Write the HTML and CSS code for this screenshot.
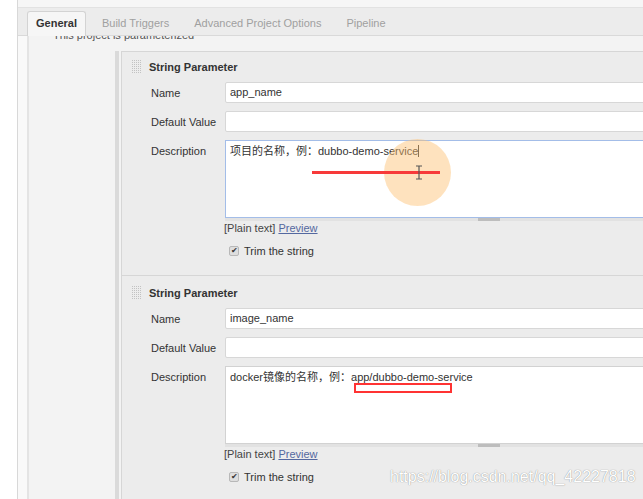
FILE: index.html
```html
<!DOCTYPE html>
<html lang="zh">
<head>
<meta charset="utf-8">
<title>Jenkins - General</title>
<link rel="stylesheet" href="styles.css">
</head>
<body>
<div class="stage">
  <div class="gutter"></div>
  <div class="frame">
    <div class="topstrip"></div>
    <div class="tabbar">
      <div class="tab active">General</div>
      <div class="tab">Build Triggers</div>
      <div class="tab">Advanced Project Options</div>
      <div class="tab">Pipeline</div>
    </div>
    <div class="body">
      <div class="rail"></div>
      <div class="main">
        <div class="pp-row"><span class="dash"></span><span>This project is parameterized</span></div>
        <div class="params">
          <div class="vbar"></div>
          <div class="blocks">
            <div class="block">
              <div class="head"><span class="grip"></span>String Parameter</div>
              <div class="fields">
                <div class="field"><div class="label">Name</div><div class="input">app_name</div></div>
                <div class="field"><div class="label">Default Value</div><div class="input"></div></div>
                <div class="field top last">
                  <div class="label">Description</div>
                  <div>
                    <div class="textarea focus">项目的名称，例：dubbo-demo-service<span class="caret"></span></div>
                    <div class="grip-bar"><div class="thumb"></div></div>
                    <div class="plain">[Plain text] <a>Preview</a></div>
                    <div class="trim"><span class="cb">✔</span>Trim the string</div>
                  </div>
                </div>
              </div>
            </div>
            <div class="block">
              <div class="head"><span class="grip"></span>String Parameter</div>
              <div class="fields">
                <div class="field"><div class="label">Name</div><div class="input">image_name</div></div>
                <div class="field"><div class="label">Default Value</div><div class="input"></div></div>
                <div class="field top last">
                  <div class="label">Description</div>
                  <div>
                    <div class="textarea">docker镜像的名称，例：app/dubbo-demo-service</div>
                    <div class="grip-bar"><div class="thumb"></div></div>
                    <div class="plain">[Plain text] <a>Preview</a></div>
                    <div class="trim"><span class="cb">✔</span>Trim the string</div>
                  </div>
                </div>
              </div>
            </div>
          </div>
        </div>
      </div>
    </div>
  </div>

  <div class="hl-circle"></div>
  <div class="red-line"></div>
  <svg class="ibeam" width="8" height="15" viewBox="0 0 8 15"><path d="M1 1h2.5c.3 0 .5.2.5.5M7 1H4.5c-.3 0-.5.2-.5.5V13.5c0 .3-.2.5-.5.5H1M4 13.5c0 .3.2.5.5.5H7" fill="none" stroke="#555" stroke-width="1.2"/></svg>
  <div class="red-box"></div>
  <div class="watermark">https://blog.csdn.net/qq_42227818</div>
</div>
</body>
</html>
```
FILE: styles.css
```css
html, body {
  margin: 0;
  padding: 0;
}
body {
  font-family: "Liberation Sans", Arial, "Noto Sans CJK SC", sans-serif;
  font-size: 11px;
  color: #333;
  background: #fff;
  overflow: hidden;
}
.stage {
  position: relative;
  width: 643px;
  height: 499px;
  overflow: hidden;
  display: flex;
}
.gutter {
  width: 17px;
  flex: none;
  background: #fff;
}
.frame {
  flex: 1;
  min-width: 0;
  border-left: 1px solid #d8d8d8;
  display: flex;
  flex-direction: column;
}
.topstrip {
  height: 7px;
  flex: none;
  background: #f6f6f6;
  border-bottom: 1px solid #e2e2e2;
}
.tabbar {
  height: 27px;
  flex: none;
  background: #ececec;
  border-bottom: 1px solid #d9d9d9;
  display: flex;
  align-items: flex-end;
  gap: 7px;
  padding-left: 9px;
  position: relative;
  z-index: 2;
}
.tab {
  box-sizing: border-box;
  height: 25px;
  margin-bottom: -1px;
  padding: 0 8px 2px;
  display: flex;
  align-items: center;
  color: #a0a0a0;
  border: 1px solid transparent;
  border-bottom: none;
  white-space: nowrap;
}
.tab.active {
  color: #333;
  font-weight: bold;
  background: #f6f6f6;
  border-color: #d3d3d3;
  border-radius: 3px 3px 0 0;
}
.body {
  flex: 1;
  display: flex;
  min-height: 0;
}
.rail {
  width: 9px;
  flex: none;
  background: #f9f9f9;
  border-right: 2px solid #e4e4e4;
}
.main {
  flex: 1;
  min-width: 0;
  background: #f3f3f3;
  overflow: hidden;
}
.pp-row {
  margin-top: -8px;
  height: 14px;
  line-height: 14px;
  padding-left: 6px;
  display: flex;
  align-items: center;
  gap: 8px;
  color: #555;
  white-space: nowrap;
}
.dash {
  width: 10px;
  height: 2px;
  background: #aaa;
}
.params {
  display: flex;
  margin-top: 9px;
  padding-left: 86px;
}
.vbar {
  width: 4px;
  flex: none;
  background: #dadada;
  margin-right: 2px;
}
.blocks {
  flex: none;
  width: 620px;
}
.block {
  border-top: 1px solid #d6d6d6;
  border-left: 1px solid #d6d6d6;
  background: #ececec;
  padding: 7px 0 16px 10px;
}
.block + .block {
  padding-top: 9px;
}
.head {
  display: flex;
  align-items: center;
  height: 16px;
  font-weight: bold;
  color: #333;
}
.grip {
  width: 9px;
  height: 14px;
  margin-right: 8px;
  background:
    repeating-linear-gradient(0deg, #ececec 0 1px, transparent 1px 2px),
    repeating-linear-gradient(90deg, #c2c2c2 0 1px, transparent 1px 2px);
}
.fields {
  margin-top: 7px;
  padding-left: 19px;
}
.field {
  display: grid;
  grid-template-columns: 74px 1fr;
  align-items: center;
  margin-bottom: 8px;
}
.field.top {
  align-items: start;
}
.field.top .label {
  padding-top: 4px;
  line-height: 14px;
}
.field.last {
  margin-bottom: 0;
}
.label {
  color: #333;
  white-space: nowrap;
}
.input {
  box-sizing: border-box;
  height: 21px;
  line-height: 19px;
  padding: 0 5px 0 4px;
  background: #fff;
  border: 1px solid #d7d7d7;
  border-radius: 2px;
}
.textarea {
  box-sizing: border-box;
  height: 78px;
  padding: 3px 4px;
  line-height: 14px;
  background: #fff;
  border: 1px solid #d2d2d2;
}
.textarea.focus {
  border-color: #a3bde8;
}
.caret {
  display: inline-block;
  width: 1px;
  height: 12px;
  background: #333;
  vertical-align: -2px;
}
.grip-bar {
  height: 3px;
  display: flex;
  background: #e2e2e2;
}
.thumb {
  margin-left: 253px;
  width: 22px;
  background: #bdbdbd;
}
.plain {
  margin-left: -1px;
  line-height: 14px;
  color: #444;
}
.plain a {
  color: #5468a0;
  text-decoration: underline;
}
.trim {
  margin-top: 8px;
  height: 16px;
  display: flex;
  align-items: center;
  gap: 5px;
  padding-left: 4px;
  color: #333;
}
.cb {
  box-sizing: border-box;
  width: 10px;
  height: 10px;
  border: 1px solid #b8b8b8;
  border-radius: 2px;
  background: #dedede;
  font-size: 8px;
  line-height: 8px;
  text-align: center;
  color: #333;
}
.hl-circle {
  position: absolute;
  left: 384px;
  top: 139px;
  width: 67px;
  height: 67px;
  border-radius: 50%;
  background: rgba(252, 190, 110, 0.45);
}
.red-line {
  position: absolute;
  left: 312px;
  top: 171px;
  width: 128px;
  height: 3px;
  background: #f73a3a;
}
.ibeam {
  position: absolute;
  left: 415px;
  top: 165px;
}
.red-box {
  position: absolute;
  left: 354px;
  top: 383px;
  width: 98px;
  height: 10px;
  box-sizing: border-box;
  border: 2px solid #f33;
}
.watermark {
  position: absolute;
  left: 390px;
  top: 467px;
  font-size: 16px;
  line-height: 20px;
  color: #fff;
  text-shadow: 0 0 1px rgba(0, 0, 0, 0.5);
  white-space: nowrap;
}
```
